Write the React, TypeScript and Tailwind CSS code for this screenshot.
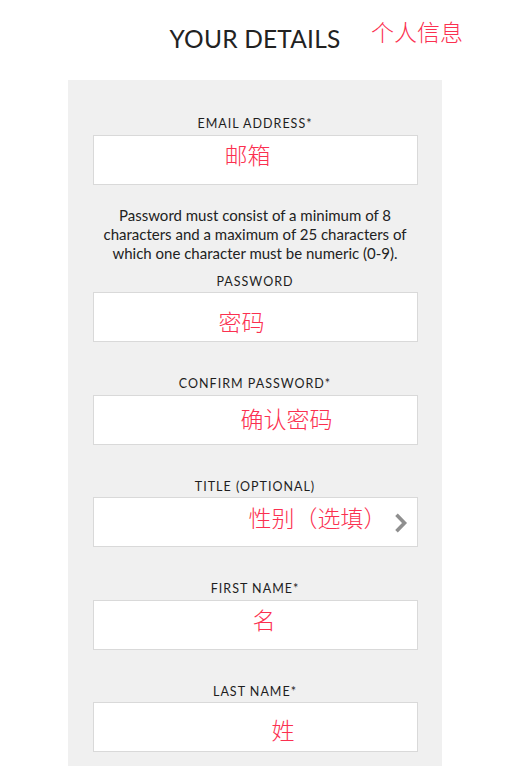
import React from 'react';

const sans = { fontFamily: 'Lato, "Noto Sans", sans-serif' };

interface FieldProps {
  label: string;
  note: string;
  noteLeft: string;
  noteTop: string;
  chevron?: boolean;
}

function Note({ text, className }: { text: string; className: string }) {
  return (
    <span
      className={`absolute whitespace-nowrap text-[23px] leading-[25px] text-[#fb3050] ${className}`}
      style={{ fontFamily: '"Noto Sans CJK SC", sans-serif', fontWeight: 300 }}
    >
      {text}
    </span>
  );
}

function Field({ label, note, noteLeft, noteTop, chevron }: FieldProps) {
  return (
    <div className="flex flex-col items-center">
      <label className="mb-[2.5px] text-[12.5px] leading-[16px] tracking-[1px] text-[#1e1e1e]">{label}</label>
      <div className="relative h-[50px] w-[325px] border border-[#d9d9d9] bg-white">
        <Note text={note} className={`${noteLeft} ${noteTop}`} />
        {chevron && (
          <svg className="absolute left-[300px] top-[15px]" width="14" height="20" viewBox="0 0 14 20">
            <path d="M2.5 1.8 L10.5 10 L2.5 18.2" fill="none" stroke="#8f8f8f" strokeWidth="3.6" strokeLinejoin="miter" />
          </svg>
        )}
      </div>
    </div>
  );
}

export default function App() {
  return (
    <div className="relative min-h-[766px] w-[531px] overflow-hidden bg-white" style={sans}>
      <Note text="个人信息" className="left-[371px] top-[19px]" />
      <div className="ml-[68px] w-[374px]">
        <header className="flex h-[80px] items-center justify-center pb-[2px]">
          <h1 className="text-[24.5px] font-normal tracking-[0.2px] text-[#222]">YOUR DETAILS</h1>
        </header>
        <div className="flex min-h-[700px] flex-col bg-[#f0f0f0] pt-[36px]">
          <Field label="EMAIL ADDRESS*" note="邮箱" noteLeft="left-[131px]" noteTop="top-[6px]" />
          <p className="mt-[21px] text-center text-[15px] leading-[19px] text-[#222]">
            Password must consist of a minimum of 8<br />
            characters and a maximum of 25 characters of<br />
            which one character must be numeric (0-9).
          </p>
          <div className="mt-[11px] flex flex-col gap-[34px]">
            <Field label="PASSWORD" note="密码" noteLeft="left-[125px]" noteTop="top-[16px]" />
            <Field label="CONFIRM PASSWORD*" note="确认密码" noteLeft="left-[147px]" noteTop="top-[10px]" />
            <Field label="TITLE (OPTIONAL)" note="性别（选填）" noteLeft="left-[155px]" noteTop="top-[7px]" chevron />
            <Field label="FIRST NAME*" note="名" noteLeft="left-[159px]" noteTop="top-[6px]" />
            <Field label="LAST NAME*" note="姓" noteLeft="left-[178px]" noteTop="top-[14px]" />
          </div>
        </div>
      </div>
    </div>
  );
}
